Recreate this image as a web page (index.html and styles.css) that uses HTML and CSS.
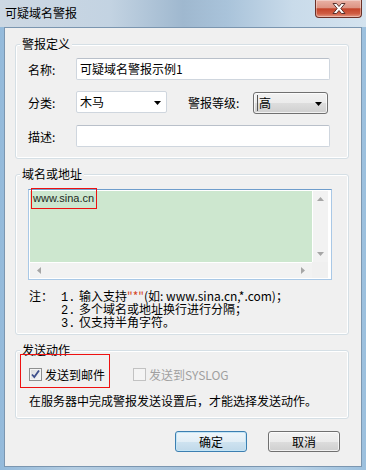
FILE: index.html
```html
<html>
<head>
	<meta http-equiv="Content-Type" content="text/html; charset=utf-8" />
	<link rel="stylesheet" href="styles.css">
</head>
<body>
<div class="window">
	<div class="titlebar">
		<span class="title">可疑域名警报</span>
		<span class="close">
			<svg width="14" height="11" viewBox="0 0 14 11"><path d="M1 0.5h3.5l2.5 3 2.5-3h3.5l-4.2 5 4.2 5h-3.5l-2.5-3-2.5 3h-3.5l4.2-5z" fill="#fff" stroke="#4b2520" stroke-width="0.9"/></svg>
		</span>
	</div>
	<div class="client">

		<div class="group g1">
			<div class="legend">警报定义</div>
			<div class="row r1">
				<span class="lbl">名称:</span>
				<span class="edit wide">可疑域名警报示例1</span>
			</div>
			<div class="row r2">
				<span class="lbl">分类:</span>
				<span class="combo kind">木马<svg class="arrow" width="7" height="4" viewBox="0 0 7 4"><path d="M0 0h7l-3.5 4z" fill="#000"/></svg></span>
				<span class="lbl level-lbl">警报等级:</span>
				<span class="combo level"><span class="sel">高</span><svg class="arrow" width="7" height="4" viewBox="0 0 7 4"><path d="M0 0h7l-3.5 4z" fill="#000"/></svg></span>
			</div>
			<div class="row r3">
				<span class="lbl">描述:</span>
				<span class="edit wide"></span>
			</div>
		</div>

		<div class="group g2">
			<div class="legend">域名或地址</div>
			<div class="memo">
				<div class="memo-text">www.sina.cn</div>
				<div class="vscroll">
					<svg width="7" height="4" viewBox="0 0 7 4"><path d="M0 4h7l-3.5-4z" fill="#a6a6a6"/></svg>
					<svg width="7" height="4" viewBox="0 0 7 4"><path d="M0 0h7l-3.5 4z" fill="#a6a6a6"/></svg>
				</div>
				<div class="hscroll">
					<svg width="4" height="7" viewBox="0 0 4 7"><path d="M4 0v7l-4-3.5z" fill="#a6a6a6"/></svg>
					<svg width="4" height="7" viewBox="0 0 4 7"><path d="M0 0v7l4-3.5z" fill="#a6a6a6"/></svg>
				</div>
				<div class="corner"></div>
				<div class="mark mark-memo"></div>
			</div>
			<div class="notes">
				<span class="nhead">注：</span>
				<div class="nlist">
					<div class="nline"><span class="num">1.</span>输入支持<span class="star">"*"</span>(如: www.sina.cn,*.com)；</div>
					<div class="nline"><span class="num">2.</span>多个域名或地址换行进行分隔；</div>
					<div class="nline"><span class="num">3.</span>仅支持半角字符。</div>
				</div>
			</div>
		</div>

		<div class="group g3">
			<div class="legend">发送动作</div>
			<div class="checks">
				<span class="check on"><svg width="9" height="9" viewBox="0 0 9 9"><path d="M1 4.5l2.3 2.6 4.7-6.6" fill="none" stroke="#3d4f8c" stroke-width="1.8"/></svg></span>
				<span class="ctext">发送到邮件</span>
				<span class="check off"></span>
				<span class="ctext gray">发送到SYSLOG</span>
				<div class="mark mark-mail"></div>
			</div>
			<div class="hint">在服务器中完成警报发送设置后，才能选择发送动作。</div>
		</div>

		<div class="buttons">
			<span class="btn default">确定</span>
			<span class="btn">取消</span>
		</div>
	</div>
</div>
</body>
</html>
```

FILE: styles.css
```css
body {margin:0; width:366px; height:470px; overflow:hidden;
	font-family:"Liberation Sans", "Noto Sans CJK SC", sans-serif; font-size:12px; color:#000;}

.window {height:470px; display:flex; flex-direction:column;
	background:linear-gradient(90deg, #94badb 0%, #b4cde2 20%, #a7c3dc 50%, #b9d2e6 80%, #9cc0de 100%);}

/* title bar */
.titlebar {height:27px; flex:none; display:flex; align-items:flex-start; justify-content:space-between;
	background:linear-gradient(90deg, #cdd8e3 0%, #c3d3e2 30%, #9fb8cf 50%, #a9c3da 62%, #c9dbea 80%, #d4e3ef 100%);}
.title {margin:5px 0 0 5px; line-height:16px; font-family:"Noto Sans CJK SC", sans-serif;}
.close {width:45px; height:17px; margin-right:4px; display:flex; align-items:center; justify-content:center;
	border:1px solid #6b3027; border-top:none; border-radius:0 0 4px 4px;
	background:linear-gradient(#e9b2a6 0%, #dd9483 45%, #c4442a 52%, #cf5d43 80%, #e59a85 100%);
	box-shadow:inset 0 0 0 1px rgba(255,255,255,0.35);}

/* client area */
.client {flex:1; margin:0 4px 3px 4px; border:1px solid #7b96b0; background:#f0f0f0;}

.group {position:relative; width:332px; margin:15px 12px 0 10px; border:1px solid #d5dfe5; border-radius:3px;
	box-shadow:inset 0 0 0 1px #fff;}
.g1 {margin-top:16px; padding-bottom:11px;}
.g2 {padding-bottom:6px;}
.g3 {padding-bottom:9px;}
.legend {width:fit-content; height:16px; margin:-9px 0 0 4px; padding:0 2px; line-height:16px; background:#f0f0f0;
	font-family:"Noto Sans CJK SC", sans-serif;}

.row {display:flex; align-items:center; height:22px; padding-left:12px;}
.r1 {margin-top:6px;}
.r2 {margin-top:11px;}
.r3 {margin-top:12px;}
.lbl {width:48px; font-family:"Noto Sans CJK SC", sans-serif;}
.level-lbl {width:65px; margin-left:21px;}

.edit {height:22px; line-height:20px; padding:0 3px; box-sizing:border-box;
	border:1px solid #cfd6de; border-top-color:#b9c0ca; border-radius:2px; background:#fff;
	font-family:"Noto Sans CJK SC", sans-serif;}
.wide {width:254px;}

.combo {position:relative; height:22px; box-sizing:border-box; line-height:20px; padding-left:3px; display:flex; align-items:center;
	font-family:"Noto Sans CJK SC", sans-serif;}
.combo .arrow {position:absolute; right:5px; top:9px;}
.kind {width:91px; border:1px solid #cfd6de; border-radius:2px; background:#fff;}
.level {width:75px; margin-top:2px; border:1px solid #707070; border-radius:3px;
	background:linear-gradient(#f2f2f2 0%, #ebebeb 50%, #dddddd 51%, #cfcfcf 100%);
	box-shadow:inset 0 0 0 1px rgba(255,255,255,0.7);}
.level .sel {line-height:16px; padding:0 1px; border-left:1px solid #555;}

/* address box */
.memo {position:relative; margin:7px 0 0 12px; width:300px; padding:1px; background:#fff;
	border:1px solid #a9c8e6; border-top-color:#6f9dcc;
	display:grid; grid-template-columns:282px 16px; grid-template-rows:71px 16px;}
.memo-text {background:#cde7cf; padding-left:3px; line-height:14px; color:#1c2a22; font-size:11px;}
.vscroll {background:#f2f2f2; border-left:1px solid #fff; display:flex; flex-direction:column; align-items:center;
	justify-content:space-between; padding:6px 0 6px 0;}
.hscroll {background:#f2f2f2; border-top:1px solid #fff; display:flex; align-items:center; justify-content:space-between; padding:0 7px;}
.corner {background:#f0f0f0;}
.mark {position:absolute; border:1px solid #ee1111;}
.mark-memo {left:2px; top:-2px; width:64px; height:19px;}

.notes {display:flex; margin:9px 0 0 13px; font-family:"Noto Sans CJK SC", sans-serif;}
.nhead {width:32px; height:13px; line-height:13px;}
.nline {height:13px; line-height:13px; white-space:nowrap;}
.num {display:inline-block; width:18px; font-family:"Liberation Mono", monospace;}
.star {color:#d4431f;}

/* send actions */
.checks {position:relative; display:flex; align-items:center; height:20px; margin:6px 0 0 13px;
	font-family:"Noto Sans CJK SC", sans-serif;}
.check {width:13px; height:13px; box-sizing:border-box; display:flex; align-items:center; justify-content:center;}
.check.on {border:1px solid #8e8f8f; background:linear-gradient(135deg, #d7d9dc, #f8f9fa);
	box-shadow:inset 0 0 0 1px #f4f4f4;}
.check.off {margin-left:28px; border:1px solid #c2c2c2; background:#f4f4f4;}
.ctext {margin-left:3px;}
.gray {color:#a0a0a0;}
.mark-mail {left:-9px; top:-10px; width:88px; height:32px;}
.hint {height:16px; margin:9px 0 0 13px; line-height:16px; font-family:"Noto Sans CJK SC", sans-serif;}

.buttons {display:flex; justify-content:flex-end; gap:21px; margin:12px 21px 0 0;}
.btn {width:72px; height:21px; box-sizing:border-box; line-height:19px; text-align:center;
	border:1px solid #707070; border-radius:3px;
	background:linear-gradient(#f2f2f2 0%, #ebebeb 50%, #dddddd 51%, #cfcfcf 100%);
	box-shadow:inset 0 0 0 1px rgba(255,255,255,0.7);
	font-family:"Noto Sans CJK SC", sans-serif;}
.btn.default {border-color:#3c7fb1; box-shadow:inset 0 0 0 1px #c4e5f6;
	background:linear-gradient(#eef6fb 0%, #e2eef6 50%, #cfe3f0 51%, #c0d9ea 100%);}
```
